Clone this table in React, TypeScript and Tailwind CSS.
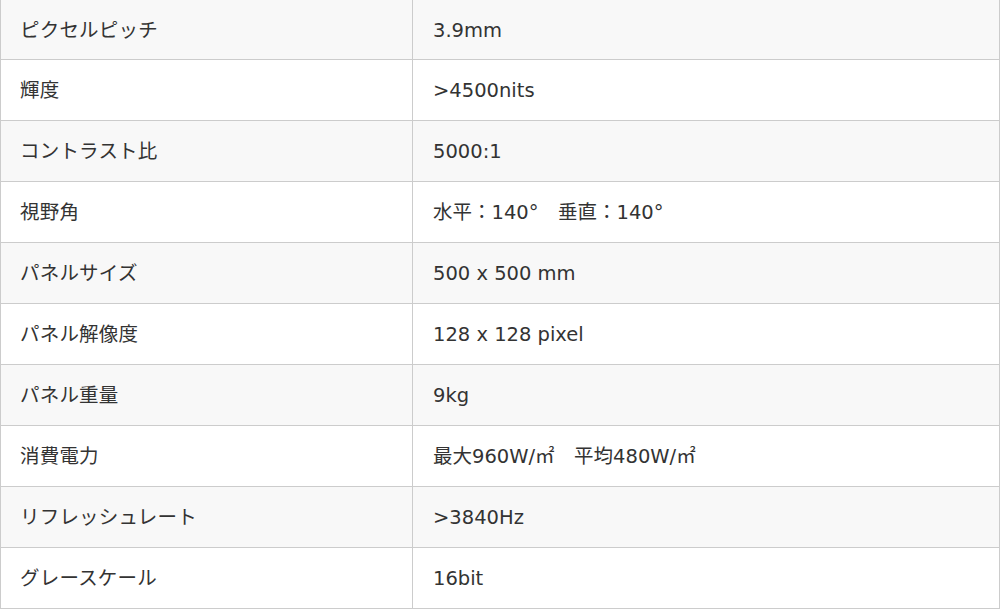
const specs: [string, string][] = [
  ['ピクセルピッチ', '3.9mm'],
  ['輝度', '>4500nits'],
  ['コントラスト比', '5000:1'],
  ['視野角', '水平：140°　垂直：140°'],
  ['パネルサイズ', '500 x 500 mm'],
  ['パネル解像度', '128 x 128 pixel'],
  ['パネル重量', '9kg'],
  ['消費電力', '最大960W/㎡　平均480W/㎡'],
  ['リフレッシュレート', '>3840Hz'],
  ['グレースケール', '16bit'],
]

export default function App() {
  return (
    <div className="h-[609px] w-[1000px] overflow-hidden bg-white font-['DejaVu_Sans','Noto_Sans_CJK_JP',sans-serif] text-[19.5px] text-[#333]">
      {specs.map(([label, value], i) => (
        <div
          key={label}
          className={`flex border-x border-b border-[#ccc] ${
            i === 0 ? 'h-[60px]' : 'h-[61px]'
          } ${i % 2 === 0 ? 'bg-[#f8f8f8]' : 'bg-white'}`}
        >
          <div className="flex w-[412px] shrink-0 items-center border-r border-[#ccc] pt-[2px] pl-[19px] tracking-[0.2px]">
            {label}
          </div>
          <div className="flex flex-1 items-center pt-[2px] pl-5">{value}</div>
        </div>
      ))}
    </div>
  )
}
